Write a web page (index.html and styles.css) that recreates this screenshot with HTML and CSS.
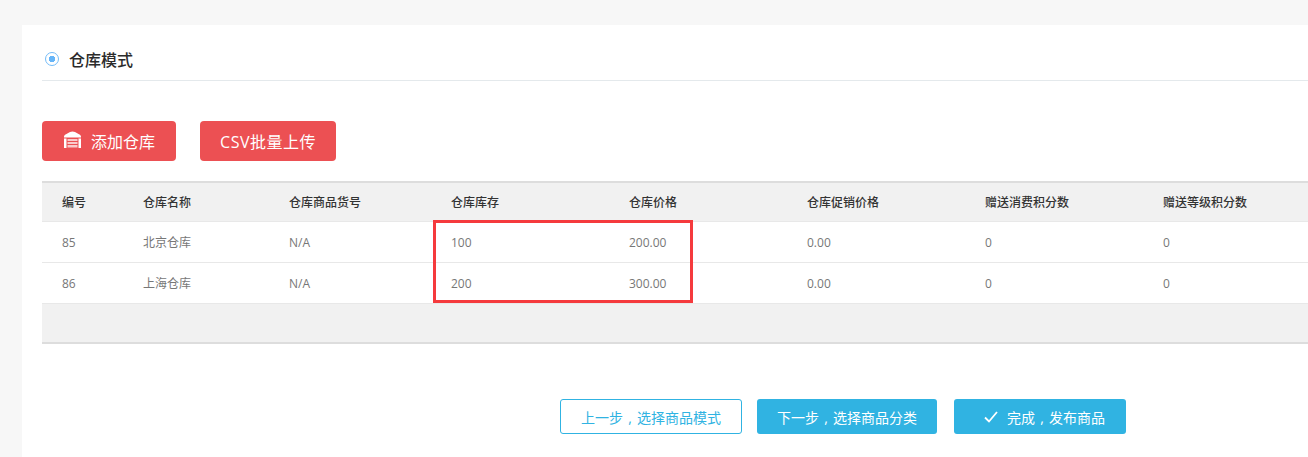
FILE: index.html
```html
<!DOCTYPE html>
<html lang="zh-CN">
<head>
    <meta charset="UTF-8">
    <meta name="viewport" content="width=device-width, initial-scale=1.0">
    <title>仓库模式</title>
    <link rel="stylesheet" href="styles.css">
</head>
<body>
    <div class="panel">
        <div class="section-title">
            <span class="radio-mark"></span>
            <h2>仓库模式</h2>
        </div>

        <div class="actions">
            <button class="btn-red btn-add">
                <svg class="icon-store" viewBox="0 0 19 17" width="19" height="17">
                    <path fill="#fff" d="M1 6 C1 4.5 1.5 4 3 3.2 L7 1 C8.5 0.2 10.5 0.2 12 1 L16 3.2 C17.5 4 18 4.5 18 6 V6.5 H1 Z"/>
                    <path fill="#fff" d="M1 7.5 H3.5 V17 H1 Z M15.5 7.5 H18 V17 H15.5 Z"/>
                    <path fill="#fff" opacity="0.7" d="M4.5 8 H14.5 V10 H4.5 Z M4.5 11 H14.5 V13 H4.5 Z M4.5 14 H14.5 V16.5 H4.5 Z"/>
                </svg>
                添加仓库
            </button>
            <button class="btn-red btn-csv">CSV批量上传</button>
        </div>

        <div class="table-wrap">
            <table class="stock-table">
                <thead>
                    <tr>
                        <th class="col-id">编号</th>
                        <th class="col-name">仓库名称</th>
                        <th class="col-sku">仓库商品货号</th>
                        <th class="col-wide">仓库库存</th>
                        <th class="col-wide">仓库价格</th>
                        <th class="col-wide">仓库促销价格</th>
                        <th class="col-wide">赠送消费积分数</th>
                        <th class="col-wide">赠送等级积分数</th>
                    </tr>
                </thead>
                <tbody>
                    <tr>
                        <td>85</td>
                        <td>北京仓库</td>
                        <td>N/A</td>
                        <td>100</td>
                        <td>200.00</td>
                        <td>0.00</td>
                        <td>0</td>
                        <td>0</td>
                    </tr>
                    <tr>
                        <td>86</td>
                        <td>上海仓库</td>
                        <td>N/A</td>
                        <td>200</td>
                        <td>300.00</td>
                        <td>0.00</td>
                        <td>0</td>
                        <td>0</td>
                    </tr>
                </tbody>
                <tfoot>
                    <tr>
                        <td colspan="8"></td>
                    </tr>
                </tfoot>
            </table>
            <div class="highlight-box"></div>
        </div>

        <div class="step-buttons">
            <button class="btn-outline">上一步 , 选择商品模式</button>
            <button class="btn-blue btn-next">下一步 , 选择商品分类</button>
            <button class="btn-blue btn-finish">
                <svg class="icon-check" viewBox="0 0 14 12" width="14" height="12">
                    <path fill="none" stroke="#fff" stroke-width="1.8" d="M1 6.5 L5 10.5 L13 1"/>
                </svg>
                完成 , 发布商品
            </button>
        </div>
    </div>
</body>
</html>
```

FILE: styles.css
```css
html, body {
    height: 100%;
}
body {
    margin: 0;
    padding: 25px 0 0 22px;
    box-sizing: border-box;
    background-color: #f7f7f7;
    font-family: "Open Sans", "Noto Sans CJK SC", sans-serif;
    color: #333;
    overflow: hidden;
}
button {
    font-family: inherit;
    cursor: pointer;
}
.panel {
    height: 432px;
    padding: 0 0 0 20px;
    box-sizing: border-box;
    background-color: #fff;
}
.section-title {
    display: flex;
    align-items: center;
    height: 43px;
    padding: 12px 0 0 3px;
    border-bottom: 1px solid #e4e9ec;
}
.section-title h2 {
    margin: 0 0 0 10px;
    font-size: 16px;
    font-weight: 500;
    color: #2b2b2b;
}
.radio-mark {
    width: 12px;
    height: 12px;
    margin-top: 1px;
    border: 1px solid #74bcf8;
    border-radius: 50%;
    background: radial-gradient(circle, #66b5f8 0 3px, #fff 3.5px);
}
.actions {
    display: flex;
    gap: 24px;
    margin-top: 40px;
}
.btn-red {
    height: 40px;
    padding: 0;
    border: none;
    border-radius: 4px;
    background-color: #ec5053;
    color: #fff;
    font-size: 16px;
}
.btn-add {
    display: flex;
    align-items: center;
    justify-content: center;
    width: 134px;
}
.icon-store {
    margin: -4px 9px 0 0;
}
.btn-csv {
    width: 136px;
    letter-spacing: 0.5px;
}
.table-wrap {
    position: relative;
    margin-top: 20px;
    overflow: hidden;
}
.stock-table {
    width: 1279px;
    table-layout: fixed;
    border-collapse: collapse;
    font-size: 12px;
}
.stock-table th {
    height: 38px;
    padding: 0 0 0 20px;
    border-top: 2px solid #ddd;
    border-bottom: 1px solid #e8e8e8;
    background-color: #f1f1f1;
    text-align: left;
    font-weight: 500;
    color: #333;
}
.stock-table td {
    height: 40px;
    padding: 0 0 0 20px;
    border-bottom: 1px solid #e8e8e8;
    color: #777;
}
.stock-table tfoot td {
    height: 38px;
    background-color: #f1f1f1;
    border-bottom: 2px solid #ddd;
}
.col-id {
    width: 61px;
}
.col-name {
    width: 126px;
}
.col-sku {
    width: 142px;
}
.col-wide {
    width: 158px;
}
.highlight-box {
    position: absolute;
    left: 391px;
    top: 39px;
    width: 254px;
    height: 77px;
    border: 3px solid #f53a3d;
}
.step-buttons {
    display: flex;
    margin: 55px 0 0 518px;
}
.step-buttons button {
    height: 35px;
    padding: 0;
    border-radius: 3px;
    font-size: 14px;
    word-spacing: 1.5px;
}
.btn-outline {
    width: 182px;
    border: 1px solid #30b3e2;
    background-color: #fff;
    color: #30b3e2;
}
.btn-blue {
    border: none;
    background-color: #30b3e2;
    color: #fff;
}
.btn-next {
    width: 180px;
    margin-left: 15px;
}
.step-buttons .btn-finish {
    display: flex;
    align-items: center;
    width: 172px;
    margin-left: 17px;
    padding-left: 30px;
}
.icon-check {
    margin-right: 9px;
}
```
